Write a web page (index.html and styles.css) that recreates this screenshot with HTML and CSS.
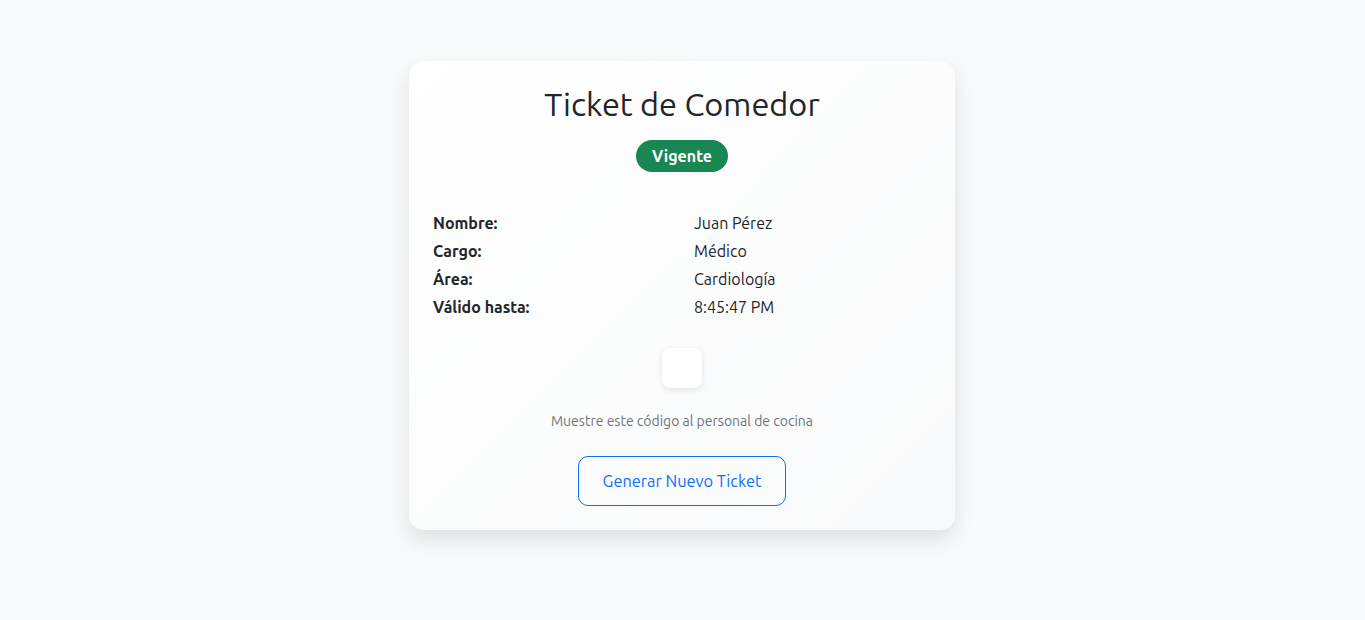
FILE: index.html
```html
<!DOCTYPE html>
<html lang="es">
<head>
<meta charset="utf-8">
<title>Ticket de Comedor</title>
<link rel="stylesheet" href="styles.css">
</head>
<body>
<main class="page">
  <section class="card">
    <h2 class="title">Ticket de Comedor</h2>
    <div class="badge-wrap"><span class="badge">Vigente</span></div>
    <div class="info">
      <div class="row"><span class="label">Nombre:</span><span class="value">Juan Pérez</span></div>
      <div class="row"><span class="label">Cargo:</span><span class="value">Médico</span></div>
      <div class="row"><span class="label">Área:</span><span class="value">Cardiología</span></div>
      <div class="row"><span class="label">Válido hasta:</span><span class="value">8:45:47 PM</span></div>
    </div>
    <div class="qr-wrap"><div class="qr"></div></div>
    <p class="hint">Muestre este código al personal de cocina</p>
    <div class="actions"><button class="btn">Generar Nuevo Ticket</button></div>
  </section>
</main>
</body>
</html>
```

FILE: styles.css
```css
* { box-sizing: border-box; }
html, body { margin: 0; }
html { background: #f8f9fa; }
body {
  background: #f8f9fa;
  min-height: 100vh;
  font-family: "Ubuntu", "Open Sans", sans-serif;
  color: #212529;
  font-size: 16px;
  line-height: 1.5;
}
.page {
  display: flex;
  justify-content: center;
  padding: 61px 1px 60px 0;
}
.card {
  width: 546px;
  padding: 24px;
  border-radius: 15px;
  background: linear-gradient(135deg, #ffffff 0%, #f8f9fa 100%);
  box-shadow: 0 10px 20px rgba(0,0,0,0.1);
}
.title {
  margin: 0;
  text-align: center;
  font-size: 32.5px;
  font-weight: 400;
  line-height: 38px;
  color: #212529;
}
.badge-wrap {
  display: flex;
  justify-content: center;
  margin-top: 17px;
}
.badge {
  display: inline-flex;
  align-items: center;
  justify-content: center;
  height: 32px;
  padding: 0 16px;
  border-radius: 16px;
  background: #198754;
  color: #fff;
  font-weight: 700;
  font-size: 16px;
}
.info {
  margin-top: 39px;
  display: flex;
  flex-direction: column;
  gap: 4px;
}
.row {
  display: grid;
  grid-template-columns: 1fr 1fr;
  column-gap: 24px;
  line-height: 24px;
}
.label { font-weight: 700; }
.value { font-weight: 400; }
.qr-wrap {
  display: flex;
  justify-content: center;
  margin-top: 29px;
}
.qr {
  width: 40px;
  height: 40px;
  background: #fff;
  border-radius: 8px;
  box-shadow: 0 2px 6px rgba(0,0,0,0.1);
}
.hint {
  margin: 23px 0 0;
  text-align: center;
  font-size: 14px;
  line-height: 21px;
  color: #6c757d;
}
.actions {
  display: flex;
  justify-content: center;
  margin-top: 24px;
}
.btn {
  height: 50px;
  padding: 0 24px;
  border: 1px solid #0d6efd;
  border-radius: 10px;
  background: transparent;
  color: #0d6efd;
  font-family: inherit;
  font-size: 16.4px;
}
```
